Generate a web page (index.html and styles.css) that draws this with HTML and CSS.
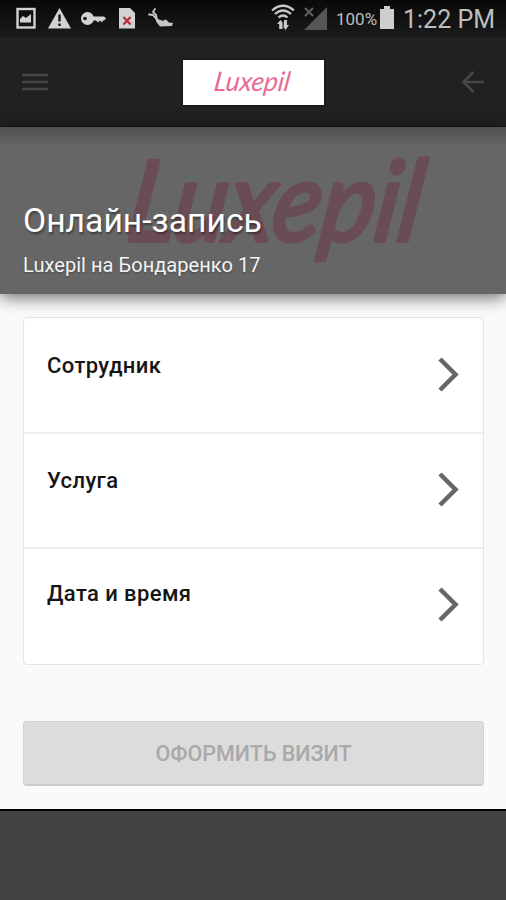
FILE: index.html
```html
<!DOCTYPE html>
<html lang="ru">
<head>
<meta charset="utf-8">
<title>Онлайн-запись</title>
<link rel="stylesheet" href="styles.css">
</head>
<body>
<div class="status">
  <svg class="notices" width="180" height="38" viewBox="0 0 180 38">
    <rect x="17.5" y="9" width="17" height="18.5" fill="none" stroke="#d2d2d2" stroke-width="2.4"/>
    <path d="M20 22.5V19l3-3 3 2 5-4v8.500Z" fill="#d2d2d2"/>
    <path d="M59.500 8 71 28.500H48Z" fill="#d2d2d2"/>
    <path d="M59.500 14.500v7M59.500 23.500v2.500" stroke="#151515" stroke-width="2.400"/>
    <circle cx="87.500" cy="18.500" r="6.500" fill="#d2d2d2"/>
    <circle cx="85" cy="18.500" r="1.800" fill="#151515"/>
    <path d="M93 16.500h11l2 2-2 2h-1l-1 2-2-2-2 2-2-2h-4Z" fill="#d2d2d2"/>
    <path d="M119 8h11l5 5v15.500h-16Z" fill="#d2d2d2"/>
    <path d="m123.500 17 7 7.500m0-7.500-7 7.500" stroke="#b52c35" stroke-width="2.200"/>
    <path d="m155 9-2 3 3 3 1 5M149 14.500l4 .5 4 5 5 1.500" fill="none" stroke="#c6c6c6" stroke-width="1.800" stroke-linecap="round" stroke-linejoin="round"/>
    <path d="m156 18 6 3 4-1.500 3 3 4 .5-1 3-12 .5-4-5Z" fill="#c6c6c6"/>
  </svg>
  <div class="indicators">
    <svg width="60" height="38" viewBox="0 0 60 38">
      <g fill="none" stroke="#c8c8c8" stroke-width="2.300">
        <path d="M1 10.500Q12 1 23 10.500M4 14q8-7 16 0M7.500 17.500q4.500-4 9 0"/>
      </g>
      <path d="M8.200 29v-5H6l3.500-4 2 2.500V29ZM13 20h3v5h2l-3.500 5-2-3Z" fill="#c8c8c8"/>
      <path d="M56 7v23H33Z" fill="#565656"/>
      <path d="m34 8 8 8m0-8-8 8" stroke="#626262" stroke-width="2"/>
    </svg>
    <span class="percent">100%</span>
    <svg class="battery" width="16" height="38" viewBox="0 0 16 38"><path d="M5 6h6v3h4v20H1V9h4Z" fill="#cecece"/></svg>
    <span class="clock">1:22 PM</span>
  </div>
</div>
<header class="bar">
  <svg width="28" height="22" viewBox="0 0 28 22"><path d="M1 4h26M1 11h26M1 18h26" stroke="#454545" stroke-width="2.600"/></svg>
  <div class="brand">
    <svg width="141" height="45" viewBox="0 0 141 45"><text class="wordmark" transform="translate(30 31) skewX(-8)" x="0" y="0" font-size="27" textLength="76" lengthAdjust="spacingAndGlyphs">Luxepil</text></svg>
  </div>
  <svg width="24" height="24" viewBox="0 0 24 24"><path d="M12.500 2 2.500 12l10 10M2.500 12H23" fill="none" stroke="#474747" stroke-width="2.600"/></svg>
</header>
<section class="hero">
  <svg class="backdrop" width="506" height="167" viewBox="0 0 506 167"><text class="wordmark large" transform="translate(124 114) skewX(-8)" x="0" y="0" font-size="112" textLength="294" lengthAdjust="spacingAndGlyphs">Luxepil</text></svg>
  <h1>Онлайн-запись</h1>
  <p>Luxepil на Бондаренко 17</p>
</section>
<main>
  <div class="options">
    <div class="option"><span>Сотрудник</span><svg width="24" height="38" viewBox="0 0 24 38"><path d="m3 4 15.500 15.500L3 35" /></svg></div>
    <div class="option"><span>Услуга</span><svg width="24" height="38" viewBox="0 0 24 38"><path d="m3 4 15.500 15.500L3 35" /></svg></div>
    <div class="option"><span>Дата и время</span><svg width="24" height="38" viewBox="0 0 24 38"><path d="m3 4 15.500 15.500L3 35" /></svg></div>
  </div>
  <button class="submit" disabled>ОФОРМИТЬ ВИЗИТ</button>
</main>
<footer></footer>
</body>
</html>
```
FILE: styles.css
```css
* { box-sizing: border-box; }
body {
  margin: 0;
  width: 506px;
  height: 900px;
  overflow: hidden;
  display: flex;
  flex-direction: column;
  background: #fafafa;
  font-family: Roboto, sans-serif;
}
svg { display: block; flex: none; }
.status {
  height: 38px;
  display: flex;
  justify-content: space-between;
  background: linear-gradient(#080808, #1b1b1b);
  color: #bebebe;
}
.indicators { display: flex; align-items: center; padding-right: 11px; }
.percent { font-size: 17px; margin-left: 5px; width: 43px; white-space: nowrap; }
.clock { font-size: 25px; margin-left: 8px; white-space: nowrap; }
.bar {
  height: 89px;
  padding: 0 21px;
  display: flex;
  align-items: center;
  justify-content: space-between;
  background: #212121;
  border-bottom: 1px solid #1a1a1a;
}
.brand { margin-right: 4px; background: #fff; box-shadow: 0 0 2px #000; }
.wordmark {
  font-family: Lato, sans-serif;
  font-style: italic;
  font-weight: 400;
  fill: #e96b96;
}
.large {
  fill: #6a4c55;
  stroke: #6a4c55;
  stroke-width: 4px;
  stroke-linejoin: round;
}
.hero {
  position: relative;
  height: 167px;
  padding: 72px 23px 0;
  background: linear-gradient(#505050, #666 20px);
  box-shadow: 0 3px 16px rgba(0, 0, 0, .6);
  color: #fff;
}
.backdrop { position: absolute; left: 0; top: 0; }
h1, p { position: relative; margin: 0; font-weight: 400; white-space: nowrap; }
h1 { font-size: 33.700px; line-height: 44px; text-shadow: 1px 2px 2px rgba(0, 0, 0, .4); }
p { font-size: 20px; line-height: 24px; margin-top: 10px; color: #f4f4f4; letter-spacing: .05px; text-shadow: 0 1px 2px rgba(0, 0, 0, .3); }
main { height: 515px; padding: 23px 22px 0 23px; }
.options { height: 348px; border: 1px solid #e4e4e4; border-radius: 4px; background: #fff; }
.option {
  height: 115px;
  padding: 35px 22px 0 23px;
  display: flex;
  justify-content: space-between;
  border-bottom: 2px solid #ececec;
  color: #151515;
  font-size: 22px;
  font-weight: 500;
  letter-spacing: .4px;
  line-height: 24px;
}
.option svg { margin-top: 1px; fill: none; stroke: #666; stroke-width: 4.500px; stroke-linecap: butt; }
.option:first-child { height: 116px; padding-top: 36px; }
.option:last-child { border: 0; padding-top: 33px; }
.option:last-child svg { margin-top: 3px; }
.submit {
  display: block;
  width: 461px;
  height: 65px;
  margin-top: 56px;
  padding: 1px 0 0;
  background: #dcdcdc;
  border: 1px solid #d2d2d2;
  border-bottom: 2px solid #cbcbcb;
  border-radius: 4px;
  color: #a9a9a9;
  font: 500 21.500px Roboto, sans-serif;
}
footer { height: 91px; border-top: 2px solid #000; background: #424242; }
```
